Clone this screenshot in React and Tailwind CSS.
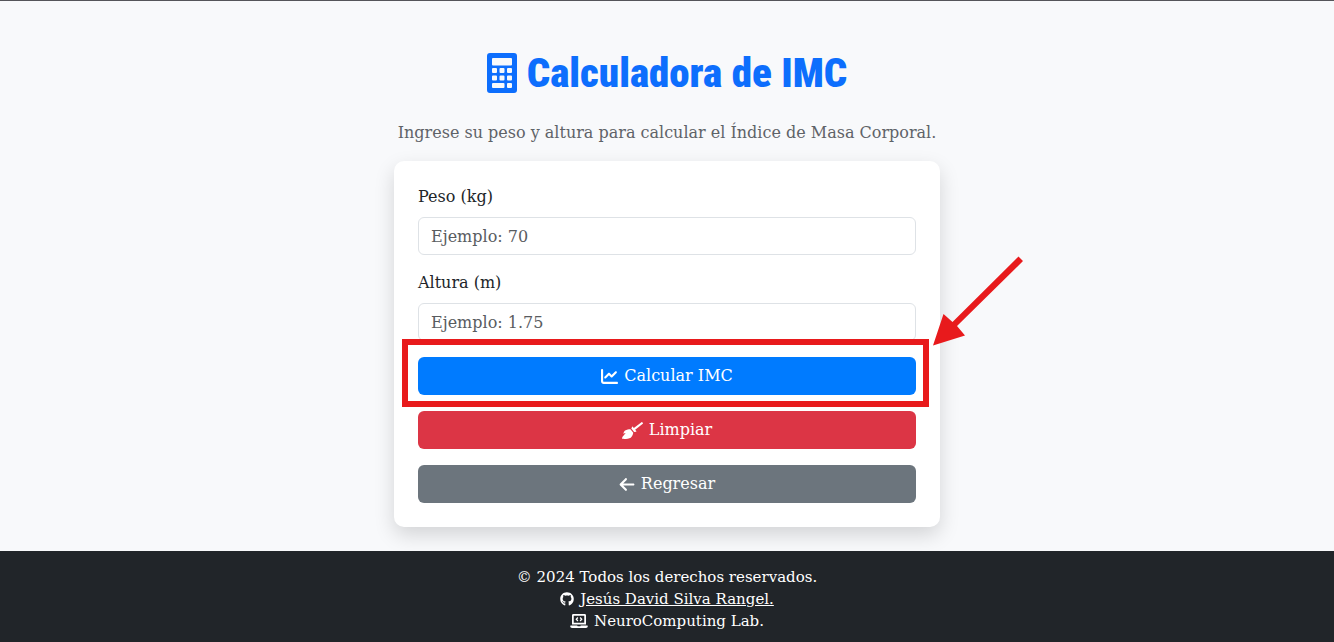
import React from "react";
import { FaArrowLeft, FaChartLine, FaGithub } from "react-icons/fa6";
import { FaBroom, FaLaptopCode } from "react-icons/fa";

function CalculatorIcon() {
  return (
    <svg className="h-10 w-[30px]" viewBox="0 0 30 40" fill="currentColor" aria-hidden="true">
      <path
        fillRule="evenodd"
        d="M3 0h24a3 3 0 0 1 3 3v34a3 3 0 0 1-3 3H3a3 3 0 0 1-3-3V3a3 3 0 0 1 3-3ZM6 5a1 1 0 0 0-1 1v5.5a1 1 0 0 0 1 1h18a1 1 0 0 0 1-1V6a1 1 0 0 0-1-1ZM6 15h3a1 1 0 0 1 1 1v3a1 1 0 0 1-1 1H6a1 1 0 0 1-1-1v-3a1 1 0 0 1 1-1ZM13.5 15h3a1 1 0 0 1 1 1v3a1 1 0 0 1-1 1h-3a1 1 0 0 1-1-1v-3a1 1 0 0 1 1-1ZM21 15h3a1 1 0 0 1 1 1v3a1 1 0 0 1-1 1h-3a1 1 0 0 1-1-1v-3a1 1 0 0 1 1-1ZM6 22.5h3a1 1 0 0 1 1 1v3a1 1 0 0 1-1 1H6a1 1 0 0 1-1-1v-3a1 1 0 0 1 1-1ZM13.5 22.5h3a1 1 0 0 1 1 1v3a1 1 0 0 1-1 1h-3a1 1 0 0 1-1-1v-3a1 1 0 0 1 1-1ZM21 22.5h3a1 1 0 0 1 1 1v3a1 1 0 0 1-1 1h-3a1 1 0 0 1-1-1v-3a1 1 0 0 1 1-1ZM6 30h10.5a1 1 0 0 1 1 1v3a1 1 0 0 1-1 1H6a1 1 0 0 1-1-1v-3a1 1 0 0 1 1-1ZM21 30h3a1 1 0 0 1 1 1v3a1 1 0 0 1-1 1h-3a1 1 0 0 1-1-1v-3a1 1 0 0 1 1-1Z"
      />
    </svg>
  );
}

function Field({ id, label, placeholder }) {
  return (
    <div className="mb-4">
      <label htmlFor={id} className="mb-2 block leading-6 text-[#212529]">
        {label}
      </label>
      <input
        id={id}
        type="text"
        placeholder={placeholder}
        className="block h-[38px] w-full rounded-md border border-[#dee2e6] bg-white px-3 text-[#212529] placeholder:text-[#595c5f]"
      />
    </div>
  );
}

function ActionButton({ icon, color, children }) {
  return (
    <button
      type="button"
      className={`flex h-[38px] w-full items-center justify-center gap-1.5 rounded-md text-white ${color}`}
    >
      {icon}
      {children}
    </button>
  );
}

function Highlight() {
  return (
    <div className="pointer-events-none absolute -top-[18px] -right-[13px] -bottom-3 -left-4 border-6 border-[#e81a1c]">
      <svg
        className="absolute -top-[90px] left-full ml-2 h-24 w-24"
        viewBox="0 0 96 96"
        fill="#e81a1c"
        aria-hidden="true"
      >
        <path d="M87.500 1.500 92 6 26 71 34 80.500 2 90.500 12.500 59 21.500 67Z" />
      </svg>
    </div>
  );
}

export default function App() {
  return (
    <div className="flex min-h-screen flex-col border-t border-[#55555a] bg-[#f8f9fb] font-['DejaVu_Serif','Liberation_Serif',serif] text-[16px]">
      <main className="mx-auto flex w-full max-w-[1140px] grow flex-col items-center px-3 pt-12 pb-6">
        <h1 className="mb-6 flex items-center gap-2.5 font-['Roboto_Condensed','Roboto',sans-serif] text-[41px] leading-[48px] font-black text-[#0d6efd]">
          <CalculatorIcon />
          Calculadora de IMC
        </h1>
        <p className="mb-4 text-center leading-6 text-[#5f6368]">
          Ingrese su peso y altura para calcular el Índice de Masa Corporal.
        </p>
        <form className="w-full max-w-[546px] rounded-[10px] bg-white p-6 shadow-[0_8px_20px_rgba(0,0,0,0.15)]">
          <Field id="peso" label="Peso (kg)" placeholder="Ejemplo: 70" />
          <Field id="altura" label="Altura (m)" placeholder="Ejemplo: 1.75" />
          <div className="flex flex-col gap-4">
            <div className="relative">
              <ActionButton
                icon={<FaChartLine className="size-[17px]" aria-hidden="true" />}
                color="bg-[#007bff]"
              >
                Calcular IMC
              </ActionButton>
              <Highlight />
            </div>
            <ActionButton
              icon={<FaBroom className="h-[17px] w-[21px]" aria-hidden="true" />}
              color="bg-[#dc3545]"
            >
              Limpiar
            </ActionButton>
            <ActionButton
              icon={<FaArrowLeft className="h-[17px] w-4" aria-hidden="true" />}
              color="bg-[#6c757d]"
            >
              Regresar
            </ActionButton>
          </div>
        </form>
      </main>
      <footer className="bg-[#212529] pt-[15px] pb-2.5 text-center text-[15px] leading-[22px] text-white">
        <p>© 2024 Todos los derechos reservados.</p>
        <p className="flex items-center justify-center gap-1.5">
          <FaGithub className="size-3.5" aria-hidden="true" />
          <a href="#perfil" className="underline">
            Jesús David Silva Rangel.
          </a>
        </p>
        <p className="flex items-center justify-center gap-1.5">
          <FaLaptopCode className="h-3.5 w-[18px]" aria-hidden="true" />
          NeuroComputing Lab.
        </p>
      </footer>
    </div>
  );
}
